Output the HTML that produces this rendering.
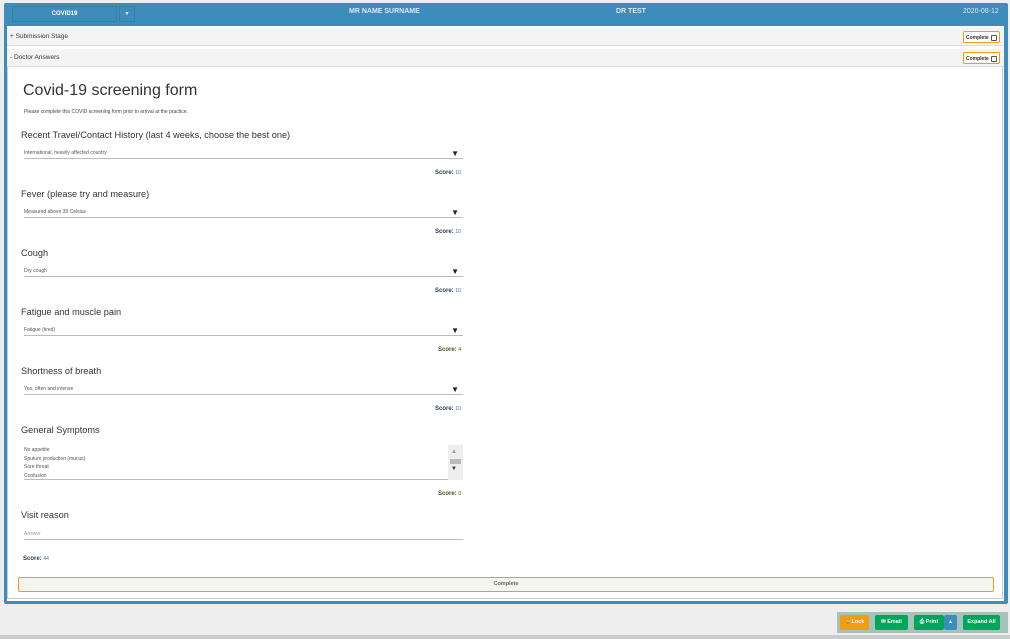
<!DOCTYPE html><html><head><style>
*{margin:0;padding:0;box-sizing:border-box}
body{width:1010px;height:639px;background:#eee;font-family:"Liberation Sans",sans-serif;position:relative;overflow:hidden}
.a{position:absolute}
.frame{left:4px;top:3px;width:1004px;height:601px;background:#3c8dbc;border-radius:2px}
.hdr{color:#dbe8f2;font-size:7px;font-weight:bold}
.pan{left:7px;width:997px;height:18px;background:#f4f4f4;border-bottom:1px solid #ddd;font-size:6.5px;color:#333}
.chk{right:4px;top:3px;width:37px;height:12px;border:1px solid #f39c12;border-radius:2px;background:#fff;font-size:5px;font-weight:bold;padding:3px 0 0 2px}
.chk i{position:absolute;right:2px;top:2.5px;width:6px;height:6px;border:1px solid #555;border-radius:1px}
.q{left:21px;font-size:9.2px;color:#333}
.sel{left:24px;width:439px;height:9px;border-bottom:1px solid #bbb;font-size:5px;color:#555}
.tri{position:absolute;right:4px;top:-1px;font-size:8px;color:#222}
.sc{font-size:6px;font-weight:bold;color:#2c3e50}
.sc span{font-weight:normal;color:#3c6ea0;font-size:5px}
.btn{top:615px;height:15px;font-size:5.5px;color:#fff;border-radius:2px;text-align:center;line-height:15px;font-weight:bold}
</style></head><body>
<div class="a" style="left:0;top:635px;width:1010px;height:4px;background:#ccc"></div>
<div class="a frame"></div>
<div class="a" style="left:12px;top:6px;width:105px;height:16px;border:1px solid #367fa9;color:#fff;font-size:6px;text-align:center;line-height:15px;font-weight:bold">COVID19</div>
<div class="a" style="left:119px;top:6px;width:16px;height:16px;border:1px solid #367fa9;color:#fff;font-size:6px;text-align:center;line-height:14px">▾</div>
<div class="a hdr" style="left:349px;top:8px">MR NAME SURNAME</div>
<div class="a hdr" style="left:616px;top:8px">DR TEST</div>
<div class="a hdr" style="left:963px;top:8px;font-weight:normal">2020-08-12</div>
<div class="a" style="left:7px;top:26px;width:997px;height:575px;background:#fff"></div>
<div class="a pan" style="top:28px;padding:5px 0 0 3px">+ Submission Stage<div class="a chk">Complete<i></i></div></div>
<div class="a pan" style="top:49px;padding:5px 0 0 3px">- Doctor Answers<div class="a chk">Complete<i></i></div></div>
<div class="a" style="left:7px;top:67px;width:996px;height:532px;border:1px solid #ccc;border-top:none;background:#fff"></div>
<div class="a" style="left:23px;top:82px;font-size:16px;color:#333">Covid-19 screening form</div>
<div class="a" style="left:24px;top:109px;font-size:5px;color:#444">Please complete this COVID screening form prior to arrival at the practice.</div>

<div class="a q" style="top:130px">Recent Travel/Contact History (last 4 weeks, choose the best one)</div>
<div class="a sel" style="top:150px">International, heavily affected country<span class="tri">▼</span></div>
<div class="a sc" style="left:435px;top:170px">Score: <span>10</span></div>

<div class="a q" style="top:189px">Fever (please try and measure)</div>
<div class="a sel" style="top:209px">Measured above 39 Celsius<span class="tri">▼</span></div>
<div class="a sc" style="left:435px;top:229px">Score: <span>10</span></div>

<div class="a q" style="top:248px">Cough</div>
<div class="a sel" style="top:268px">Dry cough<span class="tri">▼</span></div>
<div class="a sc" style="left:435px;top:288px">Score: <span>10</span></div>

<div class="a q" style="top:307px">Fatigue and muscle pain</div>
<div class="a sel" style="top:327px">Fatigue (tired)<span class="tri">▼</span></div>
<div class="a sc" style="left:438px;top:347px;color:#5a4a20">Score: <span style="color:#5a4a20">4</span></div>

<div class="a q" style="top:366px">Shortness of breath</div>
<div class="a sel" style="top:386px">Yes, often and intense<span class="tri">▼</span></div>
<div class="a sc" style="left:435px;top:406px">Score: <span>10</span></div>

<div class="a q" style="top:425px">General Symptoms</div>
<div class="a" style="left:24px;top:445px;width:424px;height:35px;border-bottom:1px solid #bbb;font-size:5px;color:#555;line-height:8.5px;padding-top:1px">No appetite<br>Sputum production (mucus)<br>Sore throat<br>Confusion</div>
<div class="a" style="left:448px;top:445px;width:15px;height:35px;background:#eee"><div class="a" style="left:3px;top:4px;font-size:6px;color:#999">▲</div><div class="a" style="left:2px;top:14px;width:11px;height:5px;background:#bbb"></div><div class="a" style="left:3px;top:21px;font-size:6px;color:#333">▼</div></div>
<div class="a sc" style="left:438px;top:491px;color:#5a4a20">Score: <span style="color:#5a4a20">0</span></div>

<div class="a q" style="top:510px">Visit reason</div>
<div class="a sel" style="top:531px;height:9px;color:#999">Answer</div>
<div class="a sc" style="left:23px;top:556px">Score: <span>44</span></div>

<div class="a" style="left:18px;top:577px;width:976px;height:15px;border:1px solid #f39c12;border-radius:2px;background:#f4f4f4;font-size:5.5px;color:#666;text-align:center;line-height:13px;font-weight:bold">Complete</div>

<div class="a" style="left:837px;top:612px;width:171px;height:21px;background:#a4c4bb"></div>
<div class="a btn" style="left:840px;width:29px;background:#f39c12">🔓Lock</div>
<div class="a btn" style="left:875px;width:33px;background:#00a65a">✉ Email</div>
<div class="a btn" style="left:914px;width:30px;background:#00a65a">⎙ Print</div>
<div class="a btn" style="left:944px;width:13px;background:#3c8dbc">▴</div>
<div class="a btn" style="left:963px;width:37px;background:#00a65a">Expand All</div>
</body></html>
